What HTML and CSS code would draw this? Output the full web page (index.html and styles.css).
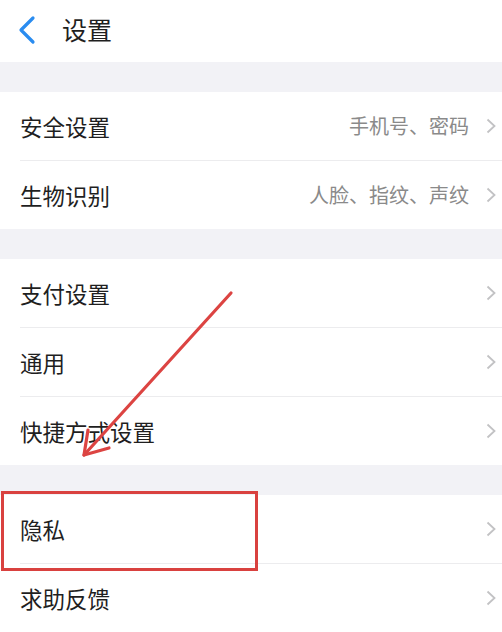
FILE: index.html
```html
<!DOCTYPE html>
<html lang="zh-CN">
<head>
<meta charset="utf-8">
<title>设置</title>
<link rel="stylesheet" href="styles.css">
</head>
<body>
<div class="page">
  <header class="header">
    <svg class="back" width="22" height="30" viewBox="0 0 22 30"><polyline points="16,3 4,15 16,27" fill="none" stroke="#2a8cf0" stroke-width="3.2" stroke-linecap="round" stroke-linejoin="round"/></svg>
    <span class="title">设置</span>
  </header>
  <div class="gap"></div>
  <section class="group">
    <div class="row"><span class="label">安全设置</span><span class="detail">手机号、密码</span><svg class="chev" width="10" height="16" viewBox="0 0 10 16"><polyline points="1.5,1.5 8.5,8 1.5,14.5" fill="none" stroke="#c2c2c4" stroke-width="1.8"/></svg></div>
    <div class="row"><span class="label">生物识别</span><span class="detail">人脸、指纹、声纹</span><svg class="chev" width="10" height="16" viewBox="0 0 10 16"><polyline points="1.5,1.5 8.5,8 1.5,14.5" fill="none" stroke="#c2c2c4" stroke-width="1.8"/></svg></div>
  </section>
  <div class="gap"></div>
  <section class="group">
    <div class="row"><span class="label">支付设置</span><span class="detail"></span><svg class="chev" width="10" height="16" viewBox="0 0 10 16"><polyline points="1.5,1.5 8.5,8 1.5,14.5" fill="none" stroke="#c2c2c4" stroke-width="1.8"/></svg></div>
    <div class="row"><span class="label">通用</span><span class="detail"></span><svg class="chev" width="10" height="16" viewBox="0 0 10 16"><polyline points="1.5,1.5 8.5,8 1.5,14.5" fill="none" stroke="#c2c2c4" stroke-width="1.8"/></svg></div>
    <div class="row"><span class="label">快捷方式设置</span><span class="detail"></span><svg class="chev" width="10" height="16" viewBox="0 0 10 16"><polyline points="1.5,1.5 8.5,8 1.5,14.5" fill="none" stroke="#c2c2c4" stroke-width="1.8"/></svg></div>
  </section>
  <div class="gap"></div>
  <section class="group">
    <div class="row"><span class="label">隐私</span><span class="detail"></span><svg class="chev" width="10" height="16" viewBox="0 0 10 16"><polyline points="1.5,1.5 8.5,8 1.5,14.5" fill="none" stroke="#c2c2c4" stroke-width="1.8"/></svg></div>
    <div class="row"><span class="label">求助反馈</span><span class="detail"></span><svg class="chev" width="10" height="16" viewBox="0 0 10 16"><polyline points="1.5,1.5 8.5,8 1.5,14.5" fill="none" stroke="#c2c2c4" stroke-width="1.8"/></svg></div>
  </section>

  <div class="highlight"></div>
  <svg class="arrow" width="502" height="632" viewBox="0 0 502 632">
    <g fill="none" stroke="#dc4442" stroke-width="3.2" stroke-linecap="round" stroke-linejoin="round">
      <line x1="231" y1="293" x2="84" y2="455"/>
      <polyline points="88,430 84,455 109,448"/>
    </g>
  </svg>
</div>
</body>
</html>
```

FILE: styles.css
```css
html, body {
  margin: 0;
  padding: 0;
  background: #ffffff;
}

.page {
  position: relative;
  width: 502px;
  height: 632px;
  overflow: hidden;
  font-family: "Noto Sans CJK SC", "Noto Sans", sans-serif;
  background: #ffffff;
}

.header {
  height: 62px;
  display: flex;
  align-items: center;
  padding-left: 17px;
  box-sizing: border-box;
}

.back {
  display: block;
  margin-top: -2px;
}

.title {
  margin-left: 23px;
  font-size: 25px;
  color: #1f1f1f;
  line-height: 1;
  margin-top: -4px;
}

.gap {
  height: 30px;
  background: #f2f2f6;
}

.group {
  background: #ffffff;
  padding-left: 20px;
}

.row {
  height: 68px;
  display: flex;
  align-items: center;
  border-bottom: 1px solid #ececee;
  padding-right: 6px;
}

.group .row:last-child {
  border-bottom: none;
}

.label {
  font-size: 22.5px;
  color: #1f1f1f;
  flex: 1;
  margin-top: -1px;
}

.detail {
  font-size: 20px;
  color: #8a8a8a;
  margin-right: 17px;
  margin-top: -1px;
}

.chev {
  display: block;
}

.highlight {
  position: absolute;
  left: 1px;
  top: 491px;
  width: 251px;
  height: 74px;
  border: 3.5px solid #d9413f;
}

.arrow {
  position: absolute;
  left: 0;
  top: 0;
  pointer-events: none;
}
```
